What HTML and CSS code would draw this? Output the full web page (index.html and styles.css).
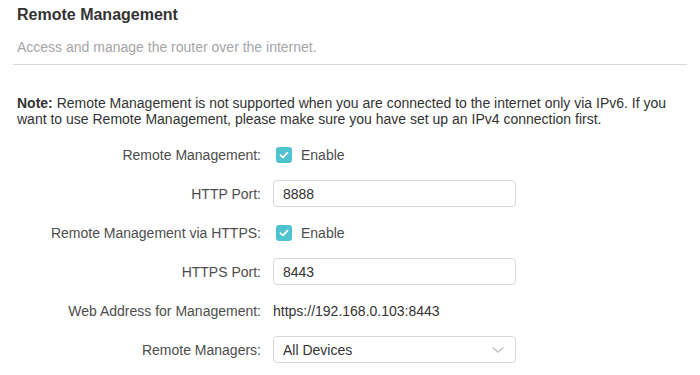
FILE: index.html
```html
<!DOCTYPE html>
<html lang="en">

<head>
    <meta charset="UTF-8">
    <meta name="viewport" content="width=device-width, initial-scale=1.0">
    <title>Remote Management</title>
    <link rel="stylesheet" href="styles.css">
</head>

<body>
    <div class="panel">
        <h2 class="title">Remote Management</h2>
        <p class="subtitle">Access and manage the router over the internet.</p>
        <hr class="divider">

        <p class="note"><b>Note:</b> Remote Management is not supported when you are connected to the internet only via IPv6. If you want to use Remote Management, please make sure you have set up an IPv4 connection first.</p>

        <form class="settings">
            <div class="row">
                <label class="label">Remote Management:</label>
                <label class="check">
                    <span class="box"><svg width="10" height="8" viewBox="0 0 10 8"><path d="M1.5 4.2 L4 6.4 L8.5 1.6" fill="none" stroke="#fff" stroke-width="1.8" stroke-linecap="round" stroke-linejoin="round"/></svg></span>
                    Enable
                </label>
            </div>
            <div class="row">
                <label class="label">HTTP Port:</label>
                <input class="field" type="text" value="8888">
            </div>
            <div class="row">
                <label class="label">Remote Management via HTTPS:</label>
                <label class="check">
                    <span class="box"><svg width="10" height="8" viewBox="0 0 10 8"><path d="M1.5 4.2 L4 6.4 L8.5 1.6" fill="none" stroke="#fff" stroke-width="1.8" stroke-linecap="round" stroke-linejoin="round"/></svg></span>
                    Enable
                </label>
            </div>
            <div class="row">
                <label class="label">HTTPS Port:</label>
                <input class="field" type="text" value="8443">
            </div>
            <div class="row">
                <label class="label">Web Address for Management:</label>
                <span class="value">https://192.168.0.103:8443</span>
            </div>
            <div class="row">
                <label class="label">Remote Managers:</label>
                <div class="field select">
                    <span>All Devices</span>
                    <svg width="14" height="8" viewBox="0 0 14 8"><path d="M1.5 1.5 L7 6 L12.5 1.5" fill="none" stroke="#c4c4c4" stroke-width="1.5"/></svg>
                </div>
            </div>
        </form>
    </div>
</body>
</html>
```

FILE: styles.css
```css
body {
    margin: 0;
    background-color: #fff;
    font-family: "Liberation Sans", Arial, sans-serif;
    font-size: 14px;
    color: #333;
}

.panel {
    padding: 0 13px;
}

.title {
    margin: 0;
    padding: 5px 0 0 4px;
    font-size: 16px;
    line-height: 20px;
    font-weight: bold;
    color: #333;
}

.subtitle {
    margin: 14px 0 0;
    padding-left: 4px;
    line-height: 17px;
    color: #a6a6a6;
}

.divider {
    margin: 8px 0 0;
    border: 0;
    border-top: 1px solid #d9d9d9;
}

.note {
    margin: 30px 0 0;
    padding-left: 4px;
    line-height: 16px;
    color: #333;
}

.settings {
    margin-top: 14px;
}

.row {
    display: flex;
    align-items: center;
    height: 27px;
    margin-bottom: 12px;
}

.row:nth-child(n+5) {
    margin-top: 1px;
}

.label {
    width: 248px;
    margin-right: 12px;
    text-align: right;
    color: #4d4d4d;
}

.check {
    display: flex;
    align-items: center;
    gap: 9px;
    margin-left: 3px;
    color: #4d4d4d;
}

.box {
    display: flex;
    align-items: center;
    justify-content: center;
    width: 16px;
    height: 16px;
    border-radius: 3px;
    background-color: #4fc3cf;
}

.field {
    box-sizing: border-box;
    width: 243px;
    height: 27px;
    padding: 0 9px;
    border: 1px solid #d9d9d9;
    border-radius: 4px;
    font-family: inherit;
    font-size: 14px;
    color: #333;
    outline: none;
}

.select {
    display: flex;
    align-items: center;
    justify-content: space-between;
    padding-right: 10px;
}

.value {
    color: #333;
}
```
